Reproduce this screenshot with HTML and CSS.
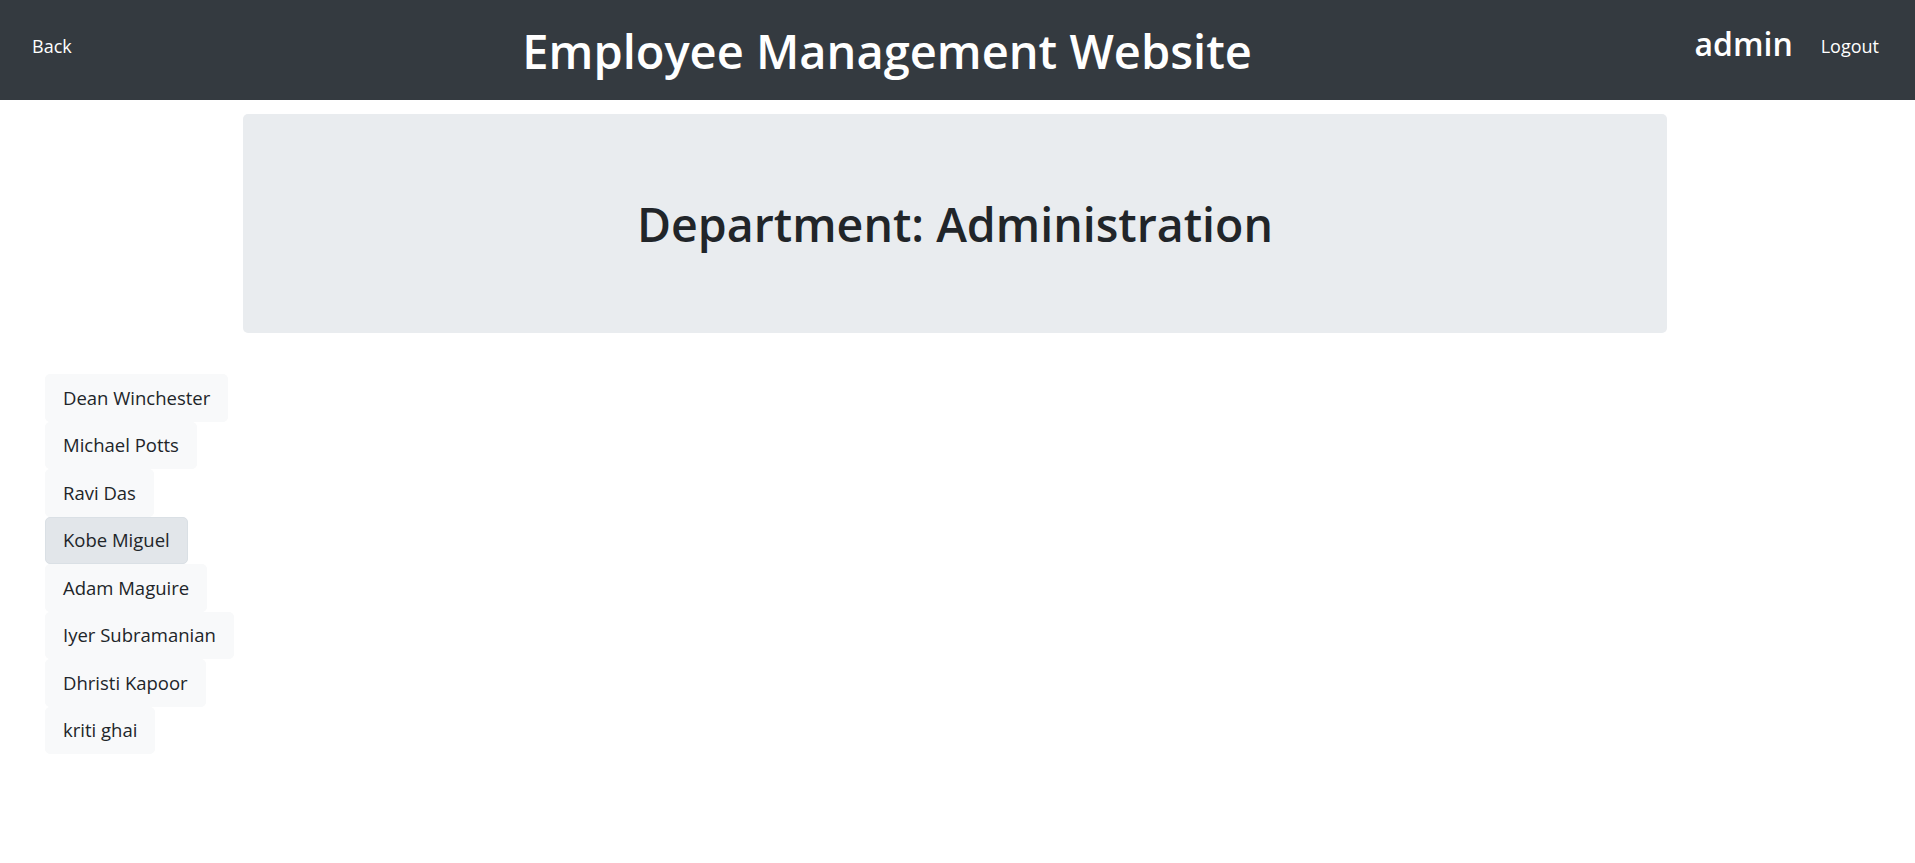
FILE: index.html
```html
<!DOCTYPE html>
<html lang="en">
<head>
<meta charset="utf-8">
<title>Employee Management Website</title>
<link rel="stylesheet" href="styles.css">
</head>
<body>
<nav class="navbar">
  <a class="nav-link" href="#">Back</a>
  <h1 class="brand">Employee Management Website</h1>
  <div class="nav-right">
    <span class="user">admin</span>
    <a class="nav-link" href="#">Logout</a>
  </div>
</nav>
<main>
  <section class="jumbotron">
    <h2 class="dept">Department: Administration</h2>
  </section>
  <div class="emp-list">
    <a class="btn" href="#">Dean Winchester</a>
    <a class="btn" href="#">Michael Potts</a>
    <a class="btn" href="#">Ravi Das</a>
    <a class="btn active" href="#">Kobe Miguel</a>
    <a class="btn" href="#">Adam Maguire</a>
    <a class="btn" href="#">Iyer Subramanian</a>
    <a class="btn" href="#">Dhristi Kapoor</a>
    <a class="btn" href="#">kriti ghai</a>
  </div>
</main>
</body>
</html>
```
FILE: styles.css
```css
* { box-sizing: border-box; }
html, body { margin: 0; padding: 0; }
body {
  font-family: "Open Sans", "Noto Sans", sans-serif;
  color: #212529;
  background: #fff;
}
.navbar {
  height: 100px;
  background: #343a40;
  display: flex;
  align-items: center;
  justify-content: space-between;
  padding: 0 28px 0 24px;
}
.nav-link {
  color: #fff;
  text-decoration: none;
  font-size: 18px;
  padding: 8px;
  margin-top: -9px;
}
.brand {
  margin: 2px 0 0 0;
  color: #fff;
  font-size: 47px;
  font-weight: 600;
  line-height: 1.2;
}
.nav-right {
  display: flex;
  align-items: center;
  gap: 20px;
}
.user {
  color: #fff;
  font-size: 32px;
  font-weight: 600;
  margin-top: -14px;
}
.jumbotron {
  margin: 14px 0 0 243px;
  width: 1424px;
  height: 219px;
  background: #e9ecef;
  border-radius: 5px;
  display: flex;
  align-items: center;
  justify-content: center;
}
.dept {
  margin: 2px 0 0 0;
  font-size: 46.5px;
  font-weight: 600;
  line-height: 1.2;
}
.emp-list {
  margin-top: 41px;
  padding-left: 45px;
  display: flex;
  flex-direction: column;
  align-items: flex-start;
}
.btn {
  display: inline-block;
  font-size: 18.5px;
  line-height: 30px;
  padding: 7.75px 17px;
  background: #f8f9fa;
  border: 1px solid #f8f9fa;
  border-radius: 5px;
  color: #212529;
  text-decoration: none;
}
.btn.active {
  background: #e2e6ea;
  border-color: #dae0e5;
}
```
